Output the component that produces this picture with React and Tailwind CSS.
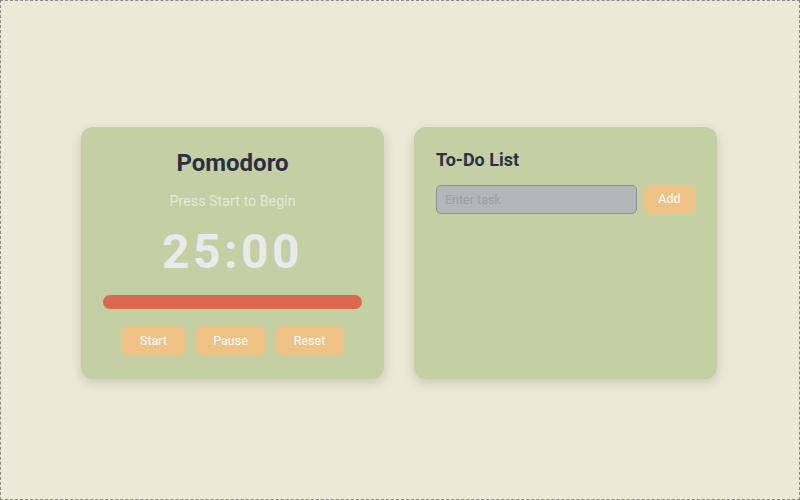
export default function App() {
  return (
    <div
      className="w-[800px] h-[500px] bg-[#ECEAD6] border border-dashed border-[#8a8a8a] flex items-center justify-center gap-[30px] pt-[6px] pr-[2px]"
      style={{ fontFamily: 'Roboto, "Liberation Sans", sans-serif' }}
    >
      {/* Pomodoro */}
      <div className="w-[303px] h-[252px] bg-[#C4CFA4] rounded-[12px] shadow-[0_4px_12px_rgba(0,0,0,0.15)] px-[22px] pt-[20px] flex flex-col items-center">
        <h1 className="text-[24px] leading-[32px] font-bold text-[#2B2F45]">Pomodoro</h1>
        <p className="mt-[12px] text-[14.3px] leading-[20px] text-[#E6E7DC]">Press Start to Begin</p>
        <div className="mt-[17px] text-[48px] leading-[48px] font-bold tracking-[3.5px] text-[#E8EAEC]">25:00</div>
        <div className="mt-[19px] w-full h-[14px] rounded-full bg-[#D9684F]" />
        <div className="mt-[17px] flex gap-[11px]">
          <button className="h-[30px] w-[63px] rounded-md bg-[#EEC284] text-white text-[12.5px]">Start</button>
          <button className="h-[30px] w-[69px] rounded-md bg-[#EEC284] text-white text-[12.5px]">Pause</button>
          <button className="h-[30px] w-[67px] rounded-md bg-[#EEC284] text-white text-[12.5px]">Reset</button>
        </div>
      </div>

      {/* To-Do */}
      <div className="w-[303px] h-[252px] bg-[#C4CFA4] rounded-[12px] shadow-[0_4px_12px_rgba(0,0,0,0.15)] px-[22px] pt-[19px]">
        <h2 className="text-[18px] leading-[28px] font-bold text-[#2B2F45]">To-Do List</h2>
        <div className="mt-[11px] flex items-center gap-[7px]">
          <input
            placeholder="Enter task"
            className="w-[201px] h-[29px] rounded-[5px] bg-[#B2B7B9] border border-[#8C9294] px-[8px] text-[12.5px] text-gray-700 placeholder:text-[#9A9FA1] outline-none"
          />
          <button className="h-[28px] w-[51px] rounded-md bg-[#EEC284] text-white text-[12.5px]">Add</button>
        </div>
      </div>
    </div>
  )
}
